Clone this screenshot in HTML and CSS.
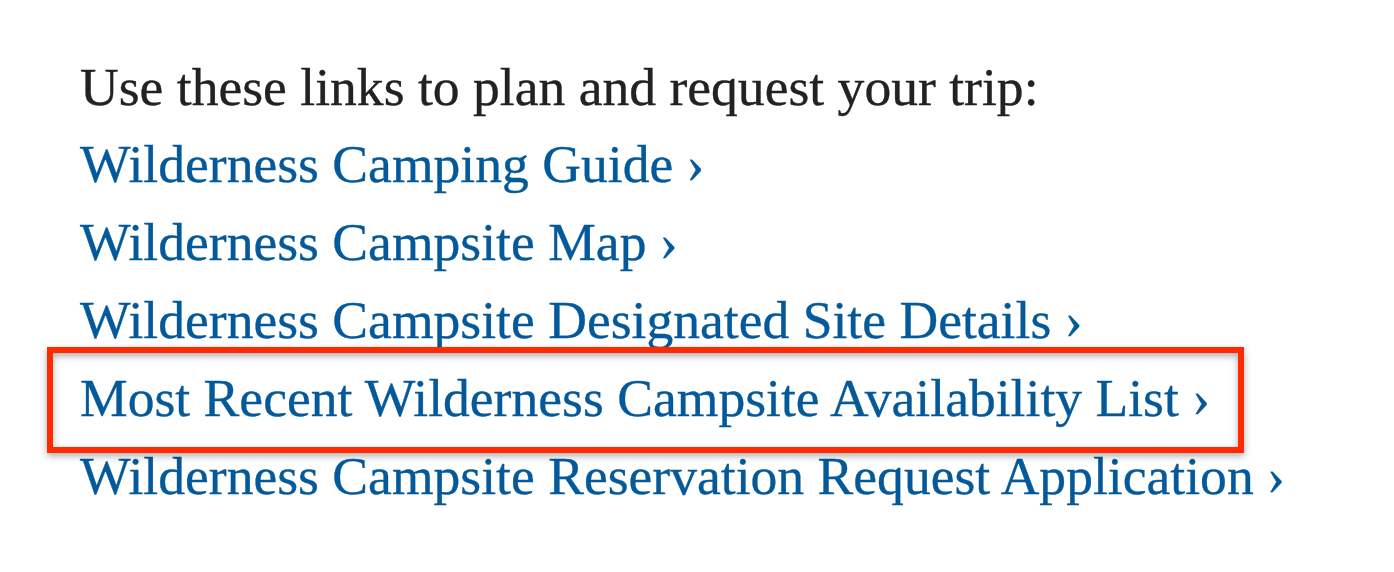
FILE: index.html
```html
<!DOCTYPE html>
<html lang="en">
<head>
  <meta charset="UTF-8">
  <title>Plan your trip</title>
  <link rel="stylesheet" href="styles.css">
</head>
<body>
  <div class="trip-links">
    <p class="intro">Use these links to plan and request your trip:</p>
    <ul class="link-list">
      <li><a href="#">Wilderness Camping Guide&nbsp;›</a></li>
      <li><a href="#">Wilderness Campsite Map&nbsp;›</a></li>
      <li><a href="#">Wilderness Campsite Designated Site Details&nbsp;›</a></li>
      <li class="highlight"><a href="#">Most Recent Wilderness Campsite Availability List&nbsp;›</a></li>
      <li><a href="#">Wilderness Campsite Reservation Request Application&nbsp;›</a></li>
    </ul>
  </div>
</body>
</html>
```

FILE: styles.css
```css
:root {
  --text-color: #222;
  --link-color: #03599a;
  --mark-color: #ff2a00;
  --mark-shadow: rgba(0, 0, 0, 0.32);
}

body {
  margin: 0;
  background: #fff;
  font-family: 'Liberation Serif', 'DejaVu Serif', serif;
  font-size: 53.6px;
  color: var(--text-color);
  -webkit-text-stroke: 0.35px currentColor;
}

.trip-links {
  padding: 49px 0 0 80px;
}

.intro {
  margin: 0;
  line-height: 76px;
}

.link-list {
  list-style: none;
  margin: 0;
  padding: 0;
}

.link-list li {
  line-height: 78px;
}

.link-list a {
  color: var(--link-color);
  text-decoration: none;
}

/* annotation frame drawn over the highlighted row */
.highlight {
  position: relative;
}

.highlight::after {
  content: "";
  position: absolute;
  left: -33px;
  top: -12px;
  width: 1197px;
  height: 106px;
  box-sizing: border-box;
  border: 6px solid var(--mark-color);
  box-shadow: 0 3px 7px var(--mark-shadow), inset 0 3px 7px var(--mark-shadow);
  pointer-events: none;
}
```
